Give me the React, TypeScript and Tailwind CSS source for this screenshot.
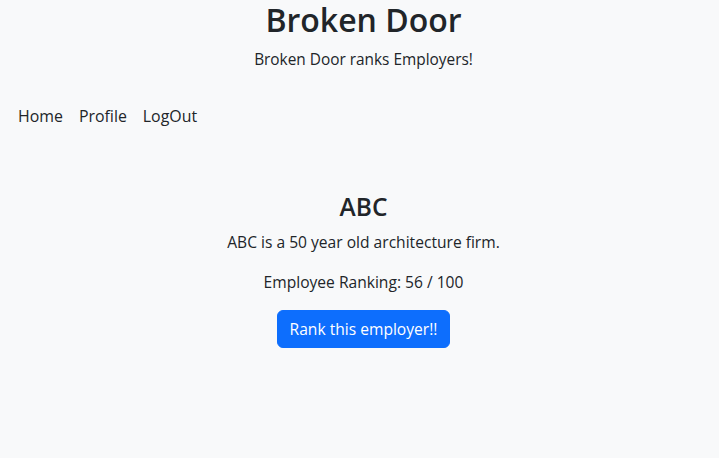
export default function App() {
  return (
    <div
      className="min-h-[458px] bg-[#f8f9fa] text-[#212529] text-[15.6px] leading-[24px]"
      style={{ fontFamily: '"Open Sans", "Noto Sans", sans-serif' }}
    >
      <header className="text-center pl-2">
        <h1 className="text-[32px] leading-[40px] font-semibold mb-2">Broken Door</h1>
        <p className="mb-4 text-[15.4px]">Broken Door ranks Employers!</p>
      </header>
      <nav className="py-2 px-[10px] flex text-[15.9px]">
        <a className="px-2 py-2" href="#">Home</a>
        <a className="px-2 py-2" href="#">Profile</a>
        <a className="px-2 py-2" href="#">LogOut</a>
      </nav>
      <main className="mt-[48px] text-center pl-2">
        <h3 className="text-[24.5px] leading-[30px] font-semibold mb-2">ABC</h3>
        <p className="mb-4">ABC is a 50 year old architecture firm.</p>
        <p className="mb-4">Employee Ranking: 56 / 100</p>
        <button className="bg-[#0d6efd] border border-[#0d6efd] text-white px-3 py-[6px] rounded-[6px] leading-[24px]">
          Rank this employer!!
        </button>
      </main>
    </div>
  );
}
